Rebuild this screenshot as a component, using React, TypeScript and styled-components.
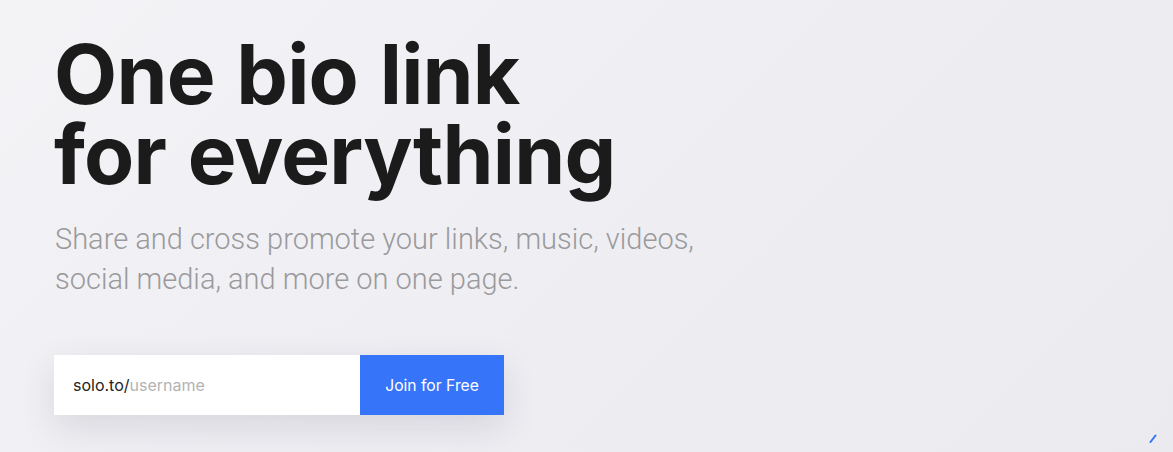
import React from "react";
import styled, { createGlobalStyle } from "styled-components";

const GlobalStyle = createGlobalStyle`
  html, body {
    margin: 0;
    padding: 0;
    height: 100%;
  }
  body {
    background: linear-gradient(135deg, #f3f3f6 0%, #eeedf2 60%, #ebeaef 100%);
    font-family: Inter, "Liberation Sans", sans-serif;
    overflow: hidden;
  }
`;

const Hero = styled.section`
  position: relative;
  display: flex;
  flex-direction: column;
  align-items: flex-start;
  height: 452px;
  box-sizing: border-box;
  padding: 35px 0 0 54px;
`;

const Title = styled.h1`
  margin: 0;
  font-family: Inter, "Liberation Sans", sans-serif;
  font-weight: 700;
  font-size: 82px;
  line-height: 80px;
  letter-spacing: -0.8px;
  word-spacing: 3px;
  color: #1b1b1b;
`;

const Subtitle = styled.p`
  margin: 24px 0 0 1px;
  font-family: Roboto, "Liberation Sans", sans-serif;
  font-weight: 300;
  font-size: 29px;
  line-height: 40px;
  color: #9a9a9c;
`;

const Form = styled.form`
  display: flex;
  margin-top: 56px;
  box-shadow: 0 12px 36px rgba(30, 30, 60, 0.12);
`;

const Field = styled.label`
  display: flex;
  align-items: center;
  width: 306px;
  height: 60px;
  box-sizing: border-box;
  padding: 0 19px;
  background: #fff;
  font-size: 16px;
  color: #232323;
`;

const Input = styled.input`
  flex: 1;
  min-width: 0;
  border: none;
  outline: none;
  padding: 0;
  background: transparent;
  font-family: Inter, "Liberation Sans", sans-serif;
  font-size: 16px;
  color: #232323;

  &::placeholder {
    color: #b3b3b3;
  }
`;

const Button = styled.button`
  width: 144px;
  height: 60px;
  border: none;
  background: #3675fa;
  color: #fff;
  font-family: Inter, "Liberation Sans", sans-serif;
  font-size: 15.7px;
  cursor: pointer;
`;

const Mark = styled.svg`
  position: absolute;
  right: 16px;
  bottom: 9px;
`;

export default function App() {
  return (
    <>
      <GlobalStyle />
      <Hero>
        <Title>
          One bio link
          <br />
          for everything
        </Title>
        <Subtitle>
          Share and cross promote your links, music, videos,
          <br />
          social media, and more on one page.
        </Subtitle>
        <Form onSubmit={(e) => e.preventDefault()}>
          <Field>
            solo.to/
            <Input placeholder="username" />
          </Field>
          <Button type="submit">Join for Free</Button>
        </Form>
        <Mark width="8" height="9" viewBox="0 0 8 9">
          <path d="M1.5 8 L6.5 1.5" stroke="#3675fa" strokeWidth="2" strokeLinecap="round" />
        </Mark>
      </Hero>
    </>
  );
}
